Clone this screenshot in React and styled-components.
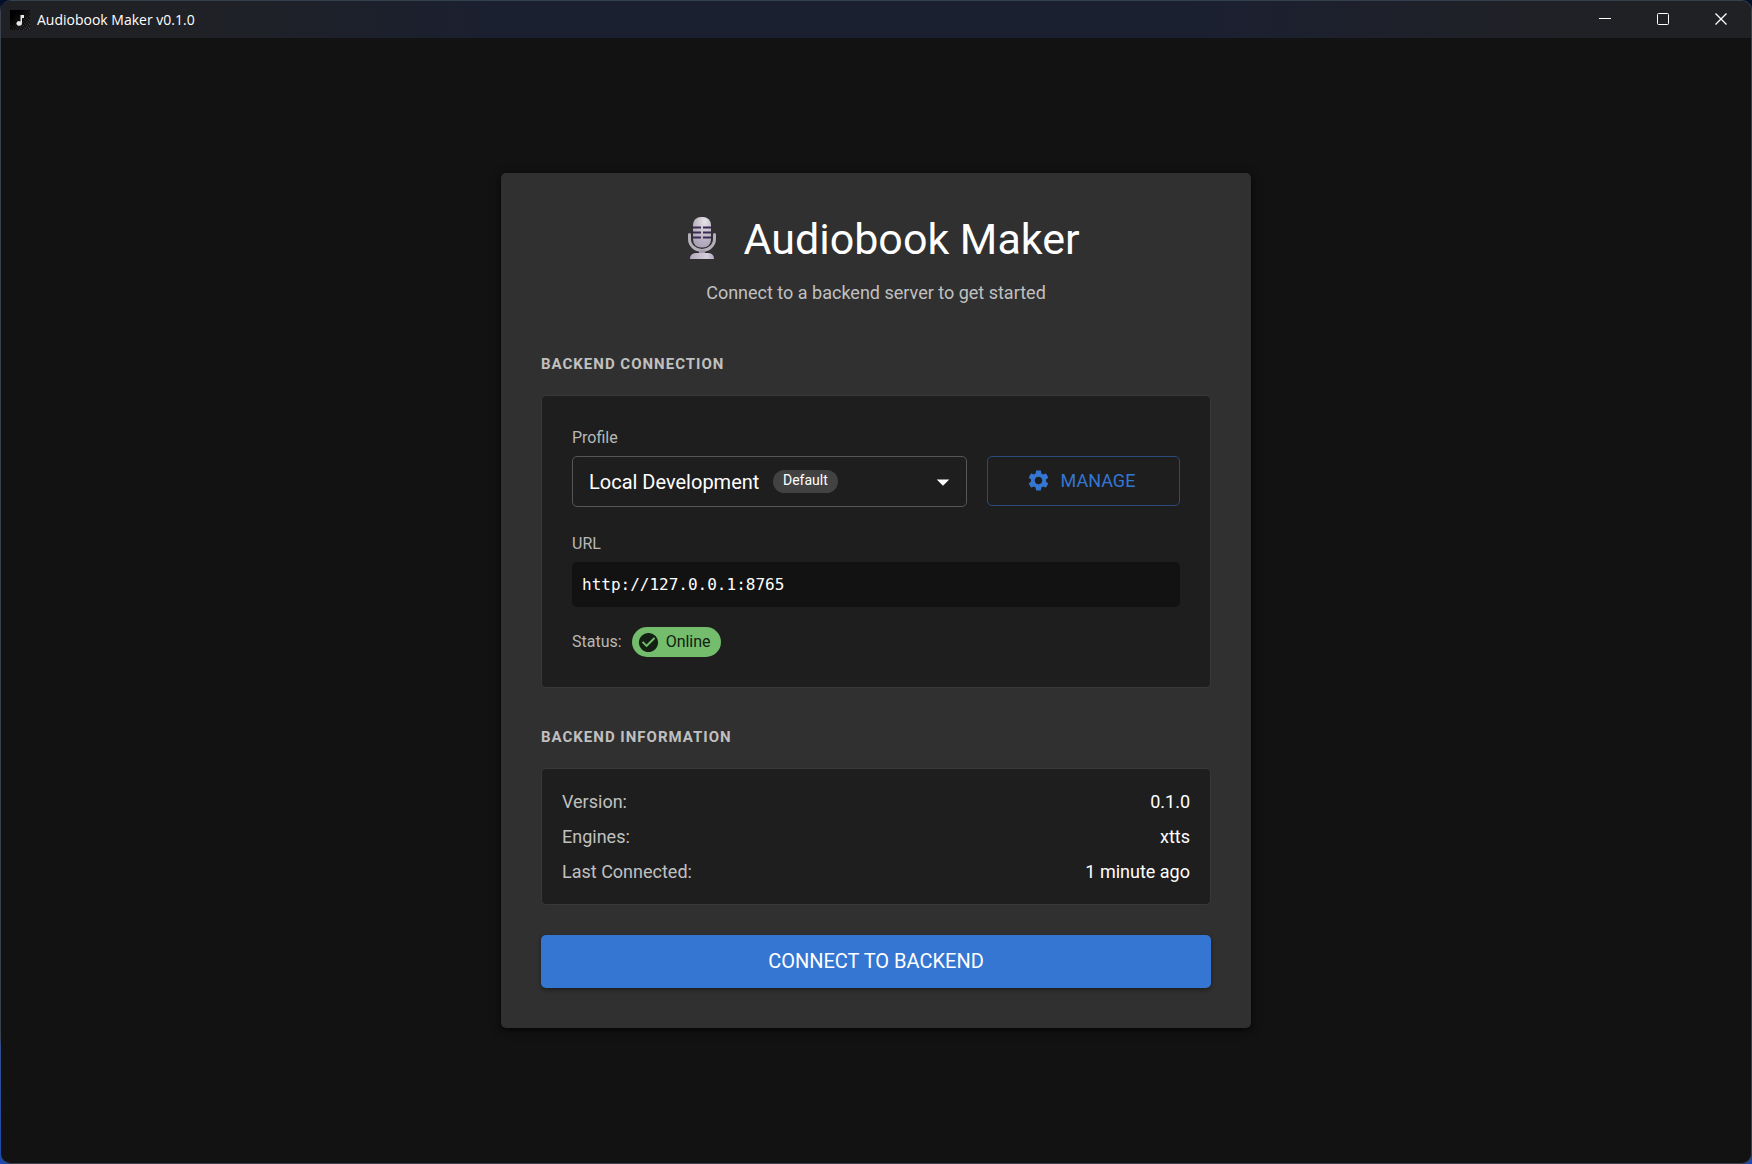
import React from "react";
import styled, { createGlobalStyle } from "styled-components";
import { MdSettings, MdCheckCircle, MdArrowDropDown } from "react-icons/md";

const GlobalStyle = createGlobalStyle`
  *, *::before, *::after { box-sizing: border-box; }
  body {
    margin: 0;
    background: #121212;
    color: #fff;
    font-family: Roboto, "Liberation Sans", sans-serif;
  }
  h1, h2, p, dl, dd { margin: 0; }
  button, input, select { font: inherit; }
`;

const Desktop = styled.div`
  display: flex;
  min-height: 100vh;
  padding-left: 1px;
  background: linear-gradient(#04102a, #04102a 4px, #3a424e 12px, #3a424e 89%, #2f4f90 90%, #1d49b0);
`;

const Window = styled.div`
  flex: 1;
  display: flex;
  flex-direction: column;
  border: 1px solid #3c4048;
  border-left: 0;
  border-top-color: #33404e;
  border-radius: 10px;
  overflow: hidden;
  background: #121212;
`;

const TitleBar = styled.header`
  display: flex;
  align-items: center;
  justify-content: space-between;
  height: 37px;
  flex: none;
  padding-left: 9px;
  background: linear-gradient(90deg, #202124, #1f2126 12%, #1b2030 28%, #1b2031 68%, #202126 88%, #202124);
`;

const AppName = styled.div`
  display: flex;
  align-items: center;
  gap: 7px;
  font-family: "Open Sans", "Noto Sans", sans-serif;
  font-size: 14px;
  line-height: 20px;
`;

const WindowControls = styled.div`
  display: flex;
  height: 100%;
  padding: 0 1px 2px 0;
`;

const WindowButton = styled.button`
  display: grid;
  place-items: center;
  width: 58px;
  height: 100%;
  padding: 0;
  border: 0;
  background: none;
  color: #fff;
`;

const Main = styled.main`
  flex: 1;
  display: flex;
  align-items: center;
  justify-content: center;
  padding: 40px 20px;
`;

const Card = styled.section`
  width: 100%;
  max-width: 750px;
  padding: 40px;
  border-radius: 5px;
  background: #303030;
  box-shadow: 0 2px 4px rgba(0, 0, 0, 0.5), 0 2px 12px rgba(0, 0, 0, 0.3);
`;

const Intro = styled.div`
  display: flex;
  flex-direction: column;
  gap: 15px;
  margin-bottom: 40px;
  text-align: center;
`;

const Title = styled.h1`
  display: flex;
  align-items: center;
  justify-content: center;
  gap: 11px;
  font-size: 43px;
  font-weight: 400;
  line-height: 52px;
`;

const Subtitle = styled.p`
  font-size: 18px;
  line-height: 25px;
  color: #c0c0c0;
`;

const SectionTitle = styled.h2`
  margin-bottom: 12px;
  font-size: 15px;
  font-weight: 700;
  line-height: 38px;
  letter-spacing: 1px;
  text-transform: uppercase;
  color: #c0c0c0;
`;

const Panel = styled.div`
  margin-bottom: 30px;
  padding: ${(p) => p.$pad}px;
  border: 1px solid #383838;
  border-radius: 5px;
  background: #1e1e1e;
`;

const Label = styled.label`
  display: block;
  margin-bottom: 6px;
  font-size: 16px;
  line-height: 24px;
  color: #b8b8b8;
`;

const ProfileRow = styled.div`
  display: grid;
  grid-template-columns: minmax(0, 1fr) 193px;
  align-items: start;
  gap: 20px;
  margin-bottom: 25px;
`;

const SelectBox = styled.div`
  position: relative;
`;

const Select = styled.select`
  display: block;
  width: 100%;
  height: 51px;
  padding: 0 40px 0 16px;
  border: 1px solid #565656;
  border-radius: 5px;
  appearance: none;
  background: transparent;
  color: #fff;
  font-size: 20px;
`;

const SelectBadge = styled.span`
  position: absolute;
  top: 14px;
  left: 201px;
  padding: 0 10px 2px;
  border-radius: 12px;
  background: #424242;
  font-size: 14px;
  line-height: 21px;
  pointer-events: none;
`;

const SelectArrow = styled(MdArrowDropDown)`
  position: absolute;
  top: 11px;
  right: 9px;
  font-size: 30px;
  pointer-events: none;
`;

const ManageButton = styled.button`
  display: flex;
  align-items: center;
  justify-content: center;
  gap: 10px;
  height: 50px;
  padding: 0 24px 2px 18px;
  border: 1px solid #2a4a7c;
  border-radius: 5px;
  background: none;
  color: #3576d3;
  font-size: 18px;
  text-transform: uppercase;

  svg { font-size: 25px; }
`;

const UrlInput = styled.input`
  display: block;
  width: 100%;
  height: 45px;
  margin-bottom: 20px;
  padding: 0 10px;
  border: 0;
  border-radius: 5px;
  background: #121212;
  color: #fff;
  font-family: "DejaVu Sans Mono", "Liberation Mono", monospace;
  font-size: 16px;
`;

const StatusRow = styled.div`
  display: flex;
  align-items: center;
  gap: 10px;
  font-size: 16px;
  line-height: 24px;
  color: #b8b8b8;
`;

const StatusPill = styled.span`
  display: flex;
  align-items: center;
  gap: 6px;
  height: 30px;
  padding: 0 10px 0 5px;
  border-radius: 15px;
  background: #73bd6c;
  color: #142013;

  svg { font-size: 23px; }
`;

const InfoList = styled.dl`
  display: flex;
  flex-direction: column;
  gap: 10px;
`;

const InfoRow = styled.div`
  display: flex;
  justify-content: space-between;
  font-size: 18px;
  line-height: 25px;

  dt { color: #c0c0c0; }
`;

const ConnectButton = styled.button`
  display: block;
  width: 100%;
  height: 53px;
  padding: 0 20px 2px;
  border: 0;
  border-radius: 5px;
  background: #3576d3;
  box-shadow: 0 2px 4px rgba(0, 0, 0, 0.4);
  color: #fff;
  font-size: 20px;
  text-transform: uppercase;
`;

function AppIcon() {
  return (
    <svg width="20" height="20" viewBox="0 0 20 20" aria-hidden="true">
      <defs>
        <pattern id="grain" width="4" height="4" patternUnits="userSpaceOnUse">
          <rect width="4" height="4" fill="#1c1c1c" />
          <path d="M0 0h1v1H0zM2 1h1v1H2zM1 3h1v1H1zM3 2h1v1H3z" fill="#484848" />
        </pattern>
        <linearGradient id="shade" x1="0" y1="0" x2="1" y2="1">
          <stop offset="0.2" stopColor="#000" />
          <stop offset="1" stopColor="#000" stopOpacity="0" />
        </linearGradient>
      </defs>
      <rect width="20" height="20" fill="url(#grain)" />
      <rect width="20" height="20" fill="url(#shade)" />
      <path d="M10.5 5h3.5v3h-2v5.5a2.8 2.3 0 1 1-1.5-2z" fill="#e6e6e6" />
    </svg>
  );
}

function Microphone() {
  return (
    <svg width="60" height="44" viewBox="0 0 60 44" aria-hidden="true">
      <defs>
        <radialGradient id="head" cx="0.65" cy="0.15" r="0.9">
          <stop offset="0" stopColor="#e6e3e8" />
          <stop offset="0.5" stopColor="#c3bdc9" />
          <stop offset="1" stopColor="#aaa0b6" />
        </radialGradient>
        <linearGradient id="stand" x1="0" y1="0" x2="1" y2="1">
          <stop offset="0" stopColor="#a9a5ad" />
          <stop offset="1" stopColor="#c4bacd" />
        </linearGradient>
        <linearGradient id="foot" x1="0" y1="0" x2="1" y2="0">
          <stop offset="0" stopColor="#b3a9bd" />
          <stop offset="0.7" stopColor="#d6cfdd" />
          <stop offset="1" stopColor="#b5a9c2" />
        </linearGradient>
      </defs>
      <path d="M17.500 17.500v4.500a12.500 11.500 0 0 0 25 0v-4.500" fill="none" stroke="#b4afb9" strokeWidth="3" strokeLinecap="round" />
      <rect x="27" y="33" width="6" height="4" fill="#a69cb0" />
      <path d="M18 42c0-4 2.500-6 6-6h12c3.500 0 6 2 6 6z" fill="url(#foot)" />
      <rect x="21" y="0" width="18" height="30.500" rx="8" fill="url(#head)" />
      <path d="M21 10.500h8M31 10.500h8M21 15.500h8M31 15.500h8M21 20.500h8M31 20.500h8" stroke="#3b2b52" strokeWidth="2" />
    </svg>
  );
}

function WindowGlyph({ children }) {
  return (
    <svg width="12" height="12" viewBox="0 0 12 12" fill="none" stroke="currentColor" aria-hidden="true">
      {children}
    </svg>
  );
}

const backendInfo = [
  ["Version:", "0.1.0"],
  ["Engines:", "xtts"],
  ["Last Connected:", "1 minute ago"],
];

export default function App() {
  return (
    <>
      <GlobalStyle />
      <Desktop>
        <Window>
          <TitleBar>
            <AppName>
              <AppIcon />
              <span>Audiobook Maker v0.1.0</span>
            </AppName>
            <WindowControls>
              <WindowButton aria-label="Minimize">
                <WindowGlyph><path d="M0 5.500h12" /></WindowGlyph>
              </WindowButton>
              <WindowButton aria-label="Maximize">
                <WindowGlyph><rect x="0.500" y="0.500" width="11" height="11" rx="1" /></WindowGlyph>
              </WindowButton>
              <WindowButton aria-label="Close">
                <WindowGlyph><path d="M0.500 0.500l11 11M11.500 0.500l-11 11" strokeWidth="1.300" /></WindowGlyph>
              </WindowButton>
            </WindowControls>
          </TitleBar>
          <Main>
            <Card>
              <Intro>
                <Title>
                  <Microphone />
                  Audiobook Maker
                </Title>
                <Subtitle>Connect to a backend server to get started</Subtitle>
              </Intro>

              <SectionTitle>Backend Connection</SectionTitle>
              <Panel $pad={30}>
                <Label htmlFor="profile">Profile</Label>
                <ProfileRow>
                  <SelectBox>
                    <Select id="profile" defaultValue="local">
                      <option value="local">Local Development</option>
                    </Select>
                    <SelectBadge>Default</SelectBadge>
                    <SelectArrow aria-hidden="true" />
                  </SelectBox>
                  <ManageButton type="button">
                    <MdSettings aria-hidden="true" />
                    Manage
                  </ManageButton>
                </ProfileRow>
                <Label htmlFor="url">URL</Label>
                <UrlInput id="url" readOnly value="http://127.0.0.1:8765" />
                <StatusRow>
                  Status:
                  <StatusPill>
                    <MdCheckCircle aria-hidden="true" />
                    Online
                  </StatusPill>
                </StatusRow>
              </Panel>

              <SectionTitle>Backend Information</SectionTitle>
              <Panel $pad={20}>
                <InfoList>
                  {backendInfo.map(([name, value]) => (
                    <InfoRow key={name}>
                      <dt>{name}</dt>
                      <dd>{value}</dd>
                    </InfoRow>
                  ))}
                </InfoList>
              </Panel>

              <ConnectButton type="button">Connect to Backend</ConnectButton>
            </Card>
          </Main>
        </Window>
      </Desktop>
    </>
  );
}
